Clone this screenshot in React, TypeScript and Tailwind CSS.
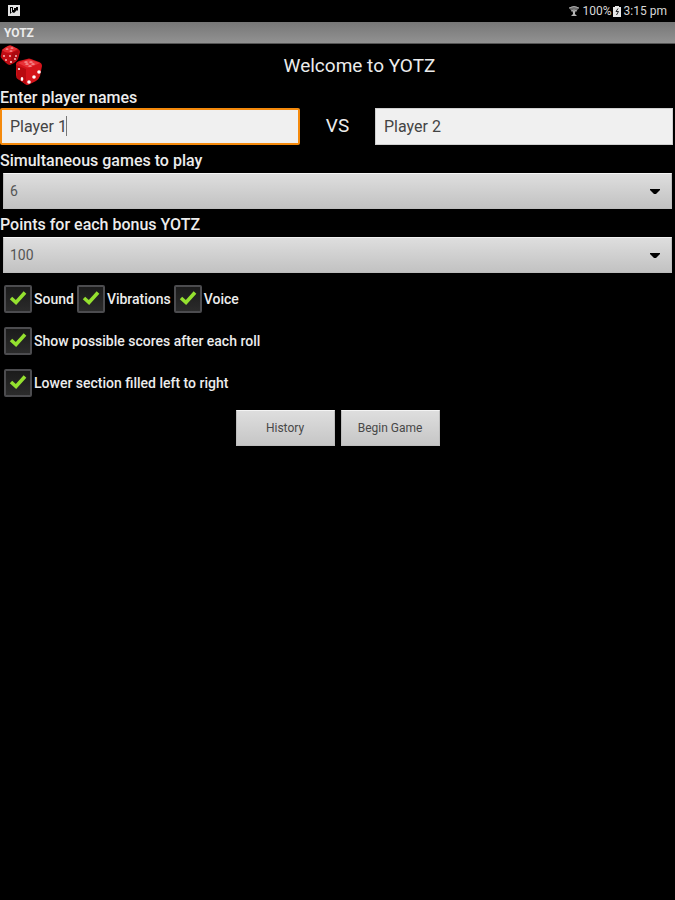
import { useState } from "react";

const GAMES = ["1", "2", "3", "4", "5", "6"];
const BONUS = ["0", "50", "100"];

function StatusBar() {
  return (
    <div className="flex h-[22px] items-center justify-between px-2 text-[#d8d8d8]">
      <svg viewBox="0 0 13 12" className="h-3 w-[13px]" aria-hidden="true">
        <path fill="#e2e2e2" fillRule="evenodd" d="M0 0h12v11H0zM2 2v7l2-2 2 1 3-3 1 1V2z" />
        <path fill="#e2e2e2" d="M3 3h1v4H3zM5 2h3v1H6v2H5z" />
      </svg>
      <div className="flex items-center text-xs">
        <svg viewBox="0 0 12 12" className="mr-[3px] h-3 w-3" aria-hidden="true">
          <path fill="#6c6c6c" d="M1 3Q6-1 11 3L6 9z" />
          <path fill="none" stroke="#a8a8a8" d="M1 3Q6 0 11 3M3 6q3-2 6 0" />
          <path fill="#b4b4b4" d="M5 6h2v3l2 2H3l2-2z" />
        </svg>
        <span>100%</span>
        <svg viewBox="0 0 8 11" className="mr-[3px] ml-px h-[11px] w-2" aria-hidden="true">
          <path fill="#e8e8e8" d="M2 0h4v1h2v10H0V1h2z" />
          <path fill="none" stroke="#222" d="M5 2.5L3 5.5h2.5L3.5 9" />
        </svg>
        <span>3:15 pm</span>
      </div>
    </div>
  );
}

function Dice() {
  return (
    <svg viewBox="0 0 44 43" className="h-[43px] w-11" aria-hidden="true">
      <g>
        <path fill="#c20d14" d="M2 5Q9-1 12 1l6 3q2 1 2 3l-2 7q-1 2-4 4l-4 2q-2 0-4-2l-4-4q-2-2-1-4z" />
        <path fill="#e32c30" d="M2 5Q9-1 12 1l6 3-6 3Q6 9 2 5z" />
        <path fill="#8f060b" d="M12 8l7-3-2 9-6 5z" opacity=".5" />
        <g fill="#ffc9c9">
          <ellipse cx="7" cy="4" rx="1.5" ry=".6" />
          <ellipse cx="12" cy="3" rx="1.5" ry=".6" />
          <ellipse cx="11" cy="6" rx="1.5" ry=".6" />
          <circle cx="4" cy="11" r=".9" />
          <circle cx="10" cy="11" r=".9" />
          <circle cx="16" cy="11" r=".9" />
          <circle cx="6" cy="15" r=".9" />
          <circle cx="11" cy="17" r="1.1" />
          <circle cx="15" cy="14" r=".9" />
        </g>
      </g>
      <g>
        <path fill="#d5141b" d="M16 19q0-2 3-3l8-2q2-1 4 0l8 3q3 1 3 4l-2 10q-1 3-4 5l-6 3q-3 2-5 0l-7-5q-2-1-2-4z" />
        <path fill="#e93338" d="M18 18l9-3q2-1 4 0l9 3-9 4q-3 1-5 0z" />
        <path fill="#b80a10" d="M16 20l10 4v15l-8-5q-1-1-1-3z" />
        <g fill="#ffc9c9">
          <ellipse cx="26" cy="17" rx="1.8" ry=".6" />
          <ellipse cx="31" cy="17" rx="1.8" ry=".6" />
          <ellipse cx="27" cy="19" rx="1.8" ry=".6" />
          <ellipse cx="33" cy="19" rx="1.8" ry=".6" />
          <ellipse cx="30" cy="21" rx="1.8" ry=".6" />
        </g>
        <g fill="#fff">
          <circle cx="19" cy="24" r="1.1" />
          <ellipse cx="22" cy="34" rx="1.3" ry="2" />
          <circle cx="29" cy="37" r="1.8" />
          <circle cx="34" cy="32" r="1.8" />
          <circle cx="39" cy="27" r="1.8" />
        </g>
      </g>
    </svg>
  );
}

function Spinner({ id, label, options, initial }: { id: string; label: string; options: string[]; initial: string }) {
  const [value, setValue] = useState(initial);

  return (
    <div className="mt-1">
      <label htmlFor={id} className="block text-base leading-6 font-medium">
        {label}
      </label>
      <div className="relative mx-[3px]">
        <select
          id={id}
          value={value}
          onChange={(e) => setValue(e.target.value)}
          className="block h-9 w-full appearance-none border border-[#bdbdbd] border-t-[#f4f4f4] bg-linear-to-b from-[#dedede] to-[#c2c2c2] px-1.5 text-sm text-[#555] outline-none"
        >
          {options.map((o) => (
            <option key={o}>{o}</option>
          ))}
        </select>
        <svg viewBox="0 0 10 6" className="pointer-events-none absolute top-4 right-3 h-1.5 w-2.5" aria-hidden="true">
          <path d="M0 0h10v1L6 5H4L0 1z" />
        </svg>
      </div>
    </div>
  );
}

function CheckBox({ label }: { label: string }) {
  const [checked, setChecked] = useState(true);

  return (
    <label className="flex h-[42px] items-center text-sm font-medium">
      <span className="relative mr-0.5 h-7 w-7">
        <input
          type="checkbox"
          checked={checked}
          onChange={(e) => setChecked(e.target.checked)}
          className="block h-7 w-7 appearance-none rounded-xs border-2 border-[#4c4c4f] bg-linear-to-b from-[#1b1b1b] to-[#2b2b2b]"
        />
        {checked && (
          <svg viewBox="0 0 28 28" className="pointer-events-none absolute inset-0" aria-hidden="true">
            <path fill="none" stroke="#94e02f" strokeWidth="3.6" d="M7 13l5 4.5L21 7.5" />
          </svg>
        )}
      </span>
      {label}
    </label>
  );
}

const field = "block h-[37px] w-full bg-[#f0f0f0] text-base text-[#444] outline-none";
const button =
  "h-9 w-[99px] border border-[#bdbdbd] border-t-[#f4f4f4] bg-linear-to-b from-[#dedede] to-[#c6c6c6] text-xs text-[#484848]";

export default function App() {
  const [first, setFirst] = useState("Player 1");
  const [second, setSecond] = useState("Player 2");

  return (
    <div className="min-h-screen bg-black font-[Roboto,sans-serif] text-[#ececec]">
      <StatusBar />
      <div className="flex h-[22px] items-center border-b border-[#555] bg-linear-to-b from-[#777] to-[#929292] px-1 text-xs font-bold">
        YOTZ
      </div>

      <header className="flex h-11 items-center">
        <Dice />
        <h1 className="flex-1 text-center text-[19px]">Welcome to YOTZ</h1>
      </header>

      <form onSubmit={(e) => e.preventDefault()}>
        <div className="grid grid-cols-[1fr_75px_1fr] items-end">
          <div>
            <label htmlFor="player1" className="block text-base leading-5 font-medium">
              Enter player names
            </label>
            <div className="relative">
              <input
                id="player1"
                value={first}
                onChange={(e) => setFirst(e.target.value)}
                className={`${field} rounded-xs border-2 border-[#f58a0c] px-2`}
              />
              <span className="absolute top-2 left-[66px] h-5 w-px bg-[#777]" />
            </div>
          </div>
          <span className="flex h-[37px] items-center justify-center text-[19px]">VS</span>
          <div className="pr-0.5">
            <input
              aria-label="Player 2"
              value={second}
              onChange={(e) => setSecond(e.target.value)}
              className={`${field} border border-[#d0d0d0] px-2`}
            />
          </div>
        </div>

        <Spinner id="games" label="Simultaneous games to play" options={GAMES} initial="6" />
        <Spinner id="bonus" label="Points for each bonus YOTZ" options={BONUS} initial="100" />

        <div className="mt-[5px] px-1">
          <div className="flex gap-[3px]">
            <CheckBox label="Sound" />
            <CheckBox label="Vibrations" />
            <CheckBox label="Voice" />
          </div>
          <CheckBox label="Show possible scores after each roll" />
          <CheckBox label="Lower section filled left to right" />
        </div>

        <div className="mt-1.5 flex justify-center gap-1.5">
          <button type="button" className={button}>
            History
          </button>
          <button type="submit" className={button}>
            Begin Game
          </button>
        </div>
      </form>
    </div>
  );
}
